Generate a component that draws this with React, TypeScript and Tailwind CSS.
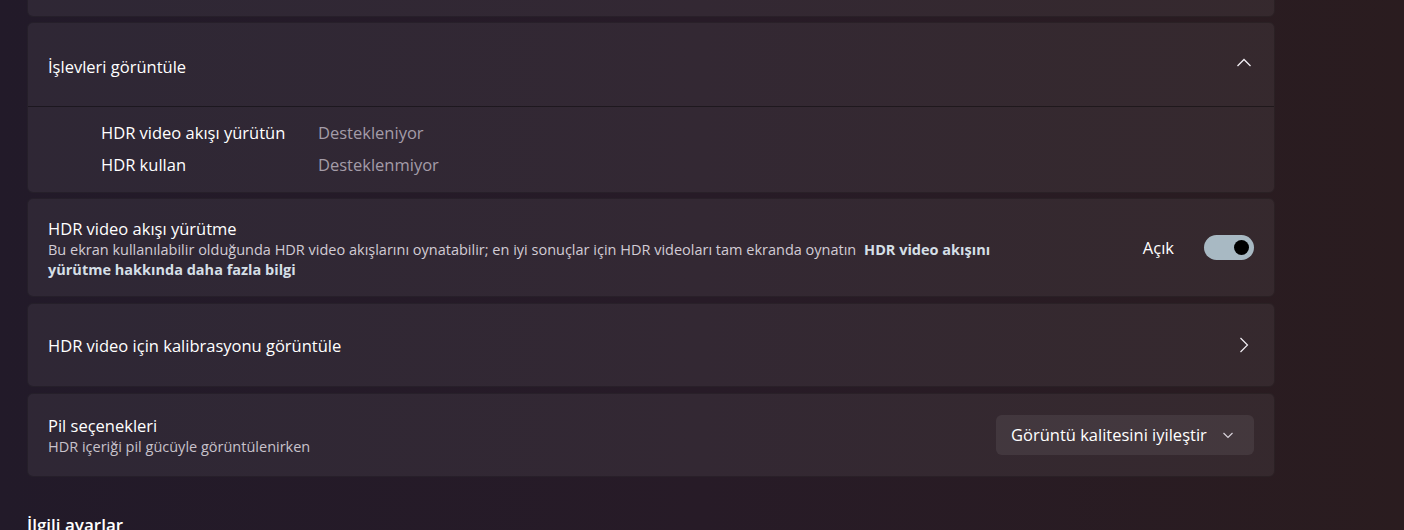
import React from 'react';

const font = { fontFamily: '"Open Sans", "Noto Sans", sans-serif' };

function ChevronUp() {
  return (
    <svg width="16" height="16" viewBox="0 0 16 16" fill="none">
      <path d="M1.5 11 L8 4.5 L14.5 11" stroke="#f2eef4" strokeWidth="1.3" />
    </svg>
  );
}

function ChevronRight() {
  return (
    <svg width="16" height="16" viewBox="0 0 16 16" fill="none">
      <path d="M4.5 1 L11.5 8 L4.5 15" stroke="#f2eef4" strokeWidth="1.2" />
    </svg>
  );
}

function ChevronDown() {
  return (
    <svg width="12" height="12" viewBox="0 0 12 12" fill="none">
      <path d="M1.5 4 L6 8.5 L10.5 4" stroke="#d8d2da" strokeWidth="1.2" />
    </svg>
  );
}

export default function App() {
  return (
    <div className="w-[1404px] h-[530px] overflow-hidden bg-gradient-to-r from-[#221a29] via-[#271b27] to-[#2a1c1f] text-white" style={font}>
      <div className="w-[1248px] ml-[27px] flex flex-col">
        {/* previous card, mostly scrolled away */}
        <div className="h-[17px] rounded-b-md bg-white/[0.06] border border-t-0 border-black/20" />

        {/* Display capabilities */}
        <div className="mt-[5px] rounded-md bg-white/[0.06] border border-black/20 flex flex-col">
          <div className="h-[84px] px-5 flex items-center justify-between border-b border-black/40">
            <div className="text-[16.5px] pt-[5px]">İşlevleri görüntüle</div>
            <div className="pr-[2px] -mt-1"><ChevronUp /></div>
          </div>
          <div className="h-[85px] pl-[73px] flex flex-col justify-center gap-[7px] text-[16.5px] pb-[1px]">
            <div className="flex items-center">
              <div className="w-[217px]">HDR video akışı yürütün</div>
              <div className="text-[#a49ca8]">Destekleniyor</div>
            </div>
            <div className="flex items-center">
              <div className="w-[217px]">HDR kullan</div>
              <div className="text-[#a49ca8]">Desteklenmiyor</div>
            </div>
          </div>
        </div>

        {/* HDR video streaming */}
        <div className="mt-[5px] h-[99px] rounded-md bg-white/[0.06] border border-black/20 px-5 flex items-center justify-between">
          <div className="flex flex-col pt-[2px]">
            <div className="text-[16.5px] leading-[22px]">HDR video akışı yürütme</div>
            <div className="text-[14.5px] leading-[20px] text-[#d2ccd5]">
              <div className="whitespace-nowrap">
                Bu ekran kullanılabilir olduğunda HDR video akışlarını oynatabilir; en iyi sonuçlar için HDR videoları tam ekranda oynatın{' '}
                <span className="font-bold text-[#d5dfe6] ml-1">HDR video akışını</span>
              </div>
              <div className="font-bold text-[#d5dfe6]">yürütme hakkında daha fazla bilgi</div>
            </div>
          </div>
          <div className="flex items-center gap-[30px]">
            <div className="text-[16.5px] pt-[2px]">Açık</div>
            <div className="w-[50px] h-[25px] rounded-full bg-[#a8b9c3] flex items-center justify-end pr-[5px]">
              <div className="w-[15px] h-[15px] rounded-full bg-black" />
            </div>
          </div>
        </div>

        {/* Calibration */}
        <div className="mt-[6px] h-[84px] rounded-md bg-white/[0.06] border border-black/20 px-5 flex items-center justify-between">
          <div className="text-[16.5px] pt-[2px]">HDR video için kalibrasyonu görüntüle</div>
          <div className="pr-[2px]"><ChevronRight /></div>
        </div>

        {/* Battery options */}
        <div className="mt-[6px] h-[84px] rounded-md bg-white/[0.06] border border-black/20 px-5 flex items-center justify-between">
          <div className="flex flex-col pt-[2px]">
            <div className="text-[16.5px] leading-[22px]">Pil seçenekleri</div>
            <div className="text-[14.5px] leading-[20px] text-[#c8c2cb]">HDR içeriği pil gücüyle görüntülenirken</div>
          </div>
          <div className="w-[258px] h-[40px] rounded-md bg-white/[0.07] flex items-center justify-between pl-[15px] pr-[20px]">
            <div className="text-[16.5px]">Görüntü kalitesini iyileştir</div>
            <ChevronDown />
          </div>
        </div>

        <div className="mt-[36px] text-[17px] font-semibold leading-[24px]">İlgili ayarlar</div>
      </div>
    </div>
  );
}
